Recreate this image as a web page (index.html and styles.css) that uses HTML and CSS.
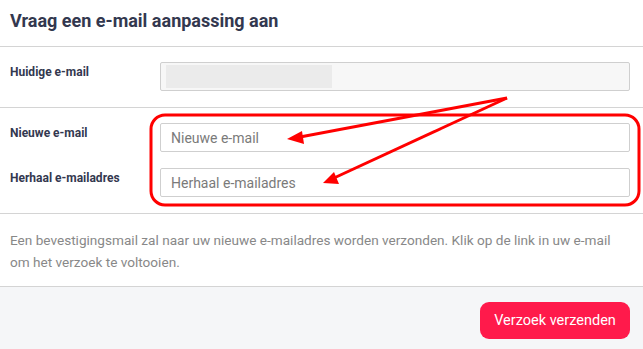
FILE: index.html
```html
<html>
<head>
<meta charset="utf-8">
<link rel="stylesheet" href="styles.css">
</head>
<body>
<div class="panel">
  <div class="panel-head">
    <h1>Vraag een e-mail aanpassing aan</h1>
  </div>

  <div class="section">
    <div class="row">
      <label>Huidige e-mail</label>
      <div class="field field-readonly"><span class="redacted"></span></div>
    </div>
  </div>

  <div class="section">
    <div class="row">
      <label for="new_mail">Nieuwe e-mail</label>
      <input type="text" class="field" id="new_mail" placeholder="Nieuwe e-mail">
    </div>
    <div class="row">
      <label for="repeat_mail">Herhaal e-mailadres</label>
      <input type="text" class="field" id="repeat_mail" placeholder="Herhaal e-mailadres">
    </div>
  </div>

  <div class="section note">
    Een bevestigingsmail zal naar uw nieuwe e-mailadres worden verzonden. Klik op de link in uw e-mail om het verzoek te voltooien.
  </div>

  <div class="panel-foot">
    <button class="btn-send">Verzoek verzenden</button>
  </div>

  <!-- annotation drawn over the form -->
  <svg class="markup" width="643" height="349" viewBox="0 0 643 349">
    <rect x="151" y="115" width="488" height="90" rx="14" fill="none" stroke="#f00" stroke-width="3"/>
    <line x1="507" y1="98" x2="300" y2="137" stroke="#f00" stroke-width="3"/>
    <polygon points="287,139 302,131 304,144" fill="#f00"/>
    <line x1="507" y1="98" x2="334" y2="178" stroke="#f00" stroke-width="3"/>
    <polygon points="323,183 334,172 339,184" fill="#f00"/>
  </svg>
</div>
</body>
</html>
```

FILE: styles.css
```css
body
{
  margin:0;
  padding:0;
  background-color:#fff;
  font-family:Roboto, "Liberation Sans", sans-serif;
}
.panel
{
  position:relative;
  width:643px;
  height:349px;
  overflow:hidden;
}
.panel-head
{
  height:46px;
  padding:0 10px;
  display:flex;
  align-items:center;
  border-bottom:1px solid #d4d4d4;
}
.panel-head h1
{
  margin:0;
  font-size:18px;
  font-weight:700;
  color:#33384f;
  padding-bottom:6px;
}
.section
{
  padding:15px 13px 16px 10px;
  border-bottom:1px solid #d4d4d4;
  display:flex;
  flex-direction:column;
  gap:16px;
}
.row
{
  display:grid;
  grid-template-columns:150px 1fr;
  align-items:start;
}
.row label
{
  font-size:12px;
  font-weight:700;
  color:#33384f;
  padding-top:3px;
}
.field
{
  box-sizing:border-box;
  height:29px;
  width:100%;
  margin:0;
  border:1px solid #cfcfcf;
  border-radius:2px;
  padding:0 10px;
  font-family:Roboto, "Liberation Sans", sans-serif;
  font-size:14px;
  color:#333;
  background:#fff;
}
.field::placeholder
{
  color:#7a7a7a;
}
.field-readonly
{
  background:#f7f7f7;
  padding:2px 5px;
}
.redacted
{
  display:block;
  width:166px;
  height:23px;
  background:#ebebeb;
}
.note
{
  display:block;
  height:73px;
  box-sizing:border-box;
  padding:15px 13px 0 10px;
  font-size:13.6px;
  line-height:22px;
  color:#888;
}
.panel-foot
{
  background:#f5f6f8;
  height:62px;
  padding:15px 13px 0 13px;
  box-sizing:border-box;
  display:flex;
  align-items:flex-start;
  justify-content:flex-end;
}
.btn-send
{
  height:37px;
  width:150px;
  border:none;
  border-radius:9px;
  background-color:#ff1a4b;
  color:#fff;
  font-family:Roboto, "Liberation Sans", sans-serif;
  font-size:14.5px;
}
.markup
{
  position:absolute;
  left:0;
  top:0;
  pointer-events:none;
}
```
